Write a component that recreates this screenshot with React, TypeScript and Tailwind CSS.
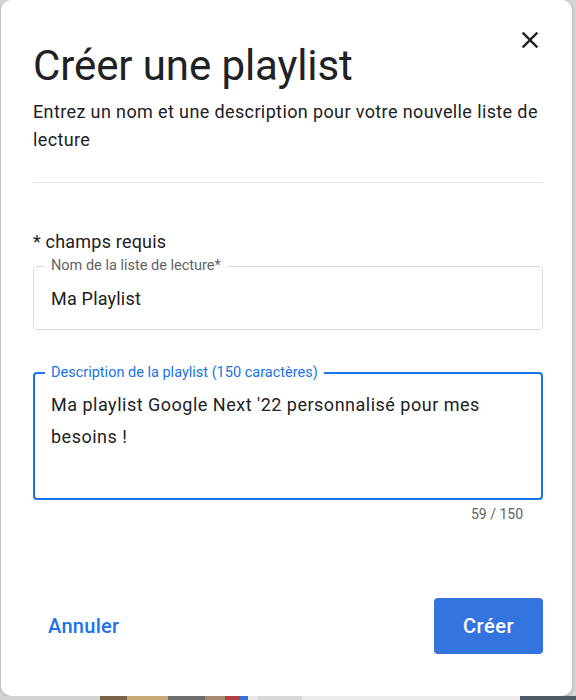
import React from "react";

const font = { fontFamily: "Roboto, 'Noto Sans', sans-serif" };

function CloseIcon() {
  return (
    <svg width="28" height="28" viewBox="0 0 24 24" fill="#202124" aria-hidden="true">
      <path d="M19 6.41L17.59 5 12 10.59 6.41 5 5 6.41 10.59 12 5 17.59 6.41 19 12 13.41 17.59 19 19 17.59 13.41 12z" />
    </svg>
  );
}

function OutlinedField({
  label,
  focused,
  children,
  className,
}: {
  label: string;
  focused?: boolean;
  children: React.ReactNode;
  className?: string;
}) {
  return (
    <div
      className={
        "relative rounded-[4px] " +
        (focused ? "border-2 border-[#1a73e8] " : "border border-[#dadce0] ") +
        (className ?? "")
      }
    >
      <span
        className={
          "absolute bg-white px-[6px] text-[14.5px] leading-[18px] " +
          (focused ? "-top-[10px] left-[10px] text-[#1a73e8]" : "-top-[10px] left-[11px] text-[#5f6368]")
        }
      >
        {label}
      </span>
      {children}
    </div>
  );
}

export default function App() {
  return (
    <div className="flex h-[700px] w-[576px] flex-col overflow-hidden bg-[#d4d4d4]" style={font}>
      <div className="ml-[1px] flex h-[696px] w-[571px] flex-col rounded-[10px] bg-white pt-[26px] shadow-[0_1px_3px_rgba(0,0,0,0.25)]">
        <div className="flex items-start justify-between pl-[32px] pr-[28px]">
          <h1 className="mt-[14px] text-[42px] leading-[52px] tracking-[-0.1px] text-[#202124]">
            Créer une playlist
          </h1>
          <button className="flex h-[28px] w-[28px] items-center justify-center">
            <CloseIcon />
          </button>
        </div>
        <div className="px-[32px]">
          <p className="mt-[6px] text-[18px] leading-[28px] tracking-[0.38px] text-[#202124]">
            Entrez un nom et une description pour votre nouvelle liste de lecture
          </p>
          <div className="mt-[28px] h-px w-[510px] bg-[#e0e0e0]" />

          <p className="mt-[47px] text-[18px] leading-[24px] tracking-[0.2px] text-[#202124]">* champs requis</p>

          <OutlinedField label="Nom de la liste de lecture*" className="mt-[12px] h-[64px] w-[510px]">
            <div className="flex h-full items-center px-[17px] text-[18px] tracking-[0.2px] text-[#202124]">
              Ma Playlist
            </div>
          </OutlinedField>

          <OutlinedField
            label="Description de la playlist (150 caractères)"
            focused
            className="mt-[42px] h-[128px] w-[510px]"
          >
            <div className="pl-[16px] pr-[40px] pt-[15px] text-[18px] leading-[32px] tracking-[0.5px] text-[#202124]">
              Ma playlist Google Next '22 personnalisé pour mes besoins !
            </div>
          </OutlinedField>
          <div className="mt-[6px] w-[510px] pr-[20px] text-right text-[14px] leading-[16px] text-[#5f6368]">
            59 / 150
          </div>
        </div>

        <div className="mt-[76px] flex w-[542px] items-center justify-between pl-[32px]">
          <button className="h-[56px] rounded-[4px] px-[15px] text-[20px] font-medium tracking-[0.3px] text-[#1a73e8]">
            Annuler
          </button>
          <button className="h-[56px] w-[109px] rounded-[4px] bg-[#3474df] text-[20px] font-medium tracking-[0.5px] text-white">
            Créer
          </button>
        </div>
      </div>
      <div className="flex h-[4px] w-full">
        <div className="w-[100px] bg-[#d4d4d4]" />
        <div className="w-[27px] bg-[#7a6448]" />
        <div className="w-[41px] bg-[#c9a878]" />
        <div className="w-[37px] bg-[#6e6e6e]" />
        <div className="w-[20px] bg-[#a88870]" />
        <div className="w-[15px] bg-[#b04040]" />
        <div className="w-[8px] bg-[#3a70d8]" />
        <div className="w-[10px] bg-[#e8e8e8]" />
        <div className="w-[44px] bg-[#d8d8d8]" />
        <div className="w-[218px] bg-[#ececec]" />
        <div className="flex-1 bg-[#4c5a66]" />
      </div>
    </div>
  );
}
